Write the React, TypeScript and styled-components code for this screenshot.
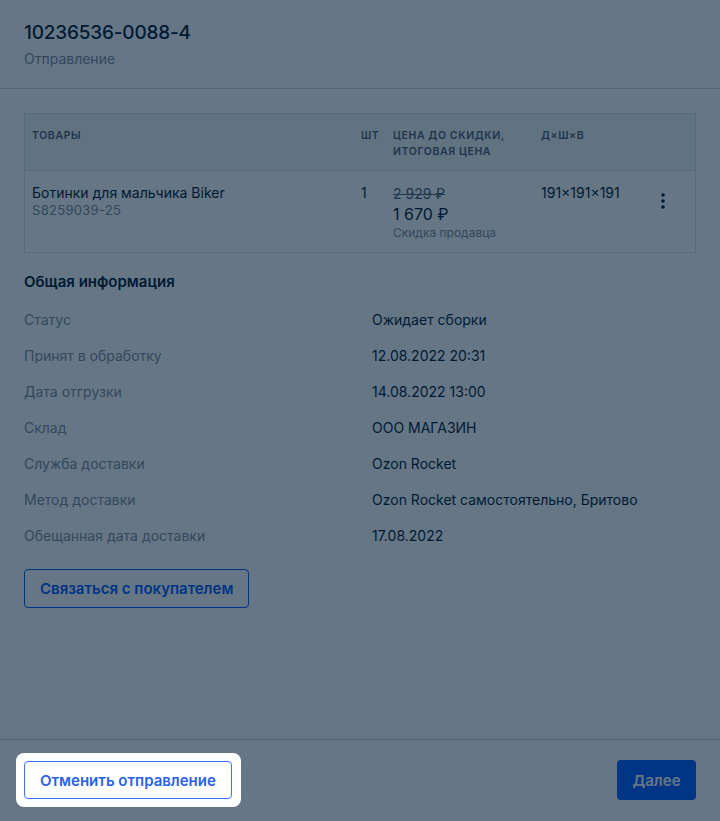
import React from "react";
import styled, { createGlobalStyle } from "styled-components";

const GlobalStyle = createGlobalStyle`
  html, body { margin: 0; padding: 0; background: #ffffff; }
  body { font-family: Inter, "Noto Sans", sans-serif; color: #001a34; -webkit-font-smoothing: antialiased; }
  * { box-sizing: border-box; }
`;

const Modal = styled.div`
  width: 720px;
  height: 821px;
  background: #ffffff;
  display: flex;
  flex-direction: column;
`;

const Header = styled.header`
  padding: 20px 24px 20px;
  border-bottom: 1px solid #d6dbe0;
`;

const Title = styled.h1`
  margin: 0;
  font-size: 19px;
  line-height: 26px;
  font-weight: 500;
  color: #001a34;
  letter-spacing: -0.2px;
`;

const Subtitle = styled.div`
  margin-top: 4px;
  font-size: 14px;
  line-height: 18px;
  color: #808d9a;
`;

const Body = styled.main`
  flex: 1;
  padding: 24px 24px 0;
  display: flex;
  flex-direction: column;
`;

const Table = styled.div`
  border: 1px solid #dde1e6;
  width: 672px;
`;

const grid = `
  display: grid;
  grid-template-columns: 329px 32px 148px 1fr 40px;
`;

const HeadRow = styled.div`
  ${grid}
  background: #f2f4f6;
  border-bottom: 1px solid #dde1e6;
  height: 57px;
  padding: 14px 0 0 7px;
`;

const HeadCell = styled.div`
  font-size: 10.5px;
  line-height: 16px;
  font-weight: 600;
  letter-spacing: 0.6px;
  text-transform: uppercase;
  color: #4d5f72;
`;

const BodyRow = styled.div`
  ${grid}
  height: 81px;
  padding: 13px 0 0 7px;
`;

const Cell = styled.div`
  font-size: 14px;
  line-height: 18px;
  color: #001a34;
`;

const Sku = styled.div`
  font-size: 13px;
  line-height: 16px;
  color: #808d9a;
  letter-spacing: 0.3px;
`;

const OldPrice = styled.div`
  font-size: 14px;
  line-height: 20px;
  color: #4d5f72;
  text-decoration: line-through;
`;

const Price = styled.div`
  font-size: 16px;
  line-height: 20px;
  color: #001a34;
`;

const Discount = styled.div`
  font-size: 12px;
  line-height: 18px;
  color: #808d9a;
`;

const MenuButton = styled.button`
  border: none;
  background: none;
  padding: 0;
  margin-top: 6px;
  width: 16px;
  height: 22px;
  display: flex;
  align-items: center;
  justify-content: center;
  color: #001a34;
`;

const SectionTitle = styled.h2`
  margin: 19px 0 0;
  font-size: 15px;
  line-height: 20px;
  font-weight: 600;
  color: #001a34;
`;

const InfoList = styled.dl`
  margin: 19px 0 0;
  display: grid;
  grid-template-columns: 348px 1fr;
  row-gap: 18px;
`;

const Label = styled.dt`
  font-size: 14px;
  line-height: 18px;
  color: #808d9a;
`;

const Value = styled.dd`
  margin: 0;
  font-size: 14px;
  line-height: 18px;
  color: #001a34;
`;

const OutlineButton = styled.button`
  font-family: Inter, "Noto Sans", sans-serif;
  background: #ffffff;
  border: 1px solid #3d73f0;
  border-radius: 4px;
  color: #2a62ea;
  font-size: 15px;
  font-weight: 600;
  height: 38px;
  padding: 0 15px;
  cursor: pointer;
`;

const ContactButton = styled(OutlineButton)`
  align-self: flex-start;
  margin-top: 24px;
  height: 39px;
  border-color: #005bff;
  color: #005bff;
`;

const Footer = styled.footer`
  border-top: 1px solid #c9d0d7;
  height: 82px;
  padding: 20px 24px 0;
  display: flex;
  justify-content: space-between;
  align-items: flex-start;
`;

const Spot = styled.div`
  position: relative;
  margin-top: 1px;
`;

const SpotHole = styled.div`
  position: absolute;
  inset: -8px -9px -8px -8px;
  border-radius: 8px;
  box-shadow: 0 0 0 3000px rgba(0, 26, 52, 0.6);
  pointer-events: none;
  z-index: 10;
`;

const PrimaryButton = styled.button`
  font-family: Inter, "Noto Sans", sans-serif;
  background: #005bff;
  border: none;
  border-radius: 4px;
  color: #ffffff;
  font-size: 15px;
  font-weight: 600;
  height: 40px;
  width: 79px;
  cursor: pointer;
`;

const Kebab = () => (
  <svg width="4" height="16" viewBox="0 0 4 16" fill="currentColor">
    <circle cx="2" cy="2" r="1.8" />
    <circle cx="2" cy="8" r="1.8" />
    <circle cx="2" cy="14" r="1.8" />
  </svg>
);

const info: [string, string][] = [
  ["Статус", "Ожидает сборки"],
  ["Принят в обработку", "12.08.2022 20:31"],
  ["Дата отгрузки", "14.08.2022 13:00"],
  ["Склад", "ООО МАГАЗИН"],
  ["Служба доставки", "Ozon Rocket"],
  ["Метод доставки", "Ozon Rocket самостоятельно, Бритово"],
  ["Обещанная дата доставки", "17.08.2022"],
];

export default function App() {
  return (
    <>
      <GlobalStyle />
      <Modal>
        <Header>
          <Title>10236536-0088-4</Title>
          <Subtitle>Отправление</Subtitle>
        </Header>
        <Body>
          <Table>
            <HeadRow>
              <HeadCell>Товары</HeadCell>
              <HeadCell>шт</HeadCell>
              <HeadCell>
                Цена до скидки,
                <br />
                итоговая цена
              </HeadCell>
              <HeadCell>Д×Ш×В</HeadCell>
              <div />
            </HeadRow>
            <BodyRow>
              <div>
                <Cell>Ботинки для мальчика Biker</Cell>
                <Sku>S8259039-25</Sku>
              </div>
              <Cell>1</Cell>
              <div>
                <OldPrice>2 929 ₽</OldPrice>
                <Price>1 670 ₽</Price>
                <Discount>Скидка продавца</Discount>
              </div>
              <Cell>191×191×191</Cell>
              <div>
                <MenuButton aria-label="menu">
                  <Kebab />
                </MenuButton>
              </div>
            </BodyRow>
          </Table>
          <SectionTitle>Общая информация</SectionTitle>
          <InfoList>
            {info.map(([k, v]) => (
              <React.Fragment key={k}>
                <Label>{k}</Label>
                <Value>{v}</Value>
              </React.Fragment>
            ))}
          </InfoList>
          <ContactButton>Связаться с покупателем</ContactButton>
        </Body>
        <Footer>
          <Spot>
            <OutlineButton>Отменить отправление</OutlineButton>
            <SpotHole />
          </Spot>
          <PrimaryButton>Далее</PrimaryButton>
        </Footer>
      </Modal>
    </>
  );
}
